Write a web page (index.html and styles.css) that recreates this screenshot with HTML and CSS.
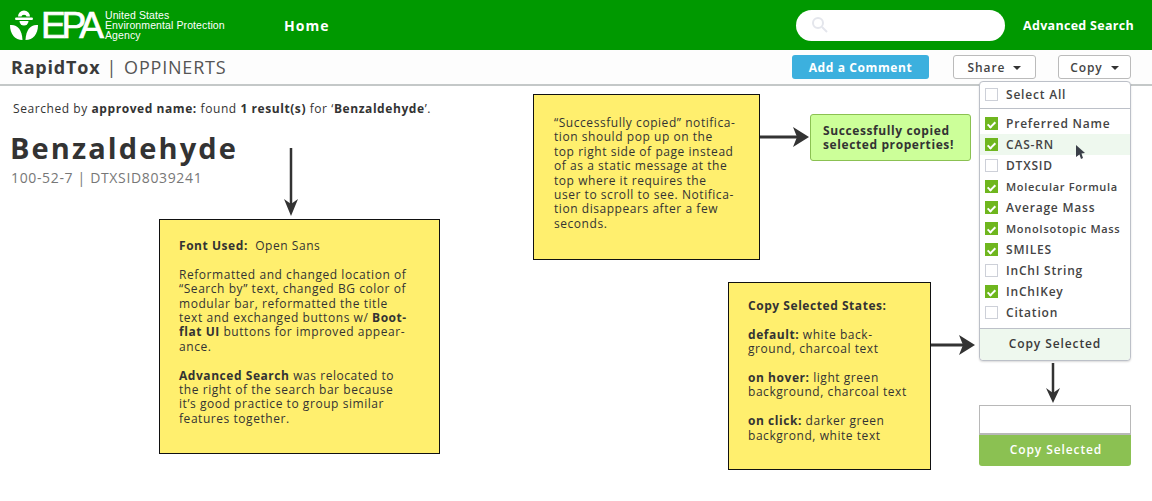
FILE: index.html
```html
<!DOCTYPE html>
<html lang="en">
<head>
  <meta charset="UTF-8" />
  <title>RapidTox | OPPINERTS</title>
  <link rel="stylesheet" href="styles.css">
</head>
<body>
  <header class="topbar">
    <div class="logo">
      <svg class="logo-mark" width="28" height="30" viewBox="0 0 28 30">
        <path d="M8 6.500a6 6 0 0 1 12 0h-3.500a2.500 1.800 0 0 0-5 0z" fill="#fff"/>
        <rect x="5" y="7.500" width="18" height="2.500" rx="1.200" fill="#fff"/>
        <path d="M9.500 11h9a4.500 4.500 0 0 1-9 0z" fill="#fff"/>
        <path d="M0 15c7-1 12 4 12.500 15C5 30 0 24 0 15z" fill="#fff"/>
        <path d="M28 15c-7-1-12 4-12.500 15C23 30 28 24 28 15z" fill="#fff"/>
      </svg>
      <span class="logo-epa">EPA</span>
      <span class="logo-name">United States<br>Environmental Protection<br>Agency</span>
    </div>
    <a class="nav-home">Home</a>
    <div class="search">
      <svg width="18" height="18" viewBox="0 0 18 18" fill="none" stroke="#e4e6ec" stroke-width="2">
        <circle cx="7" cy="7" r="5"/>
        <path d="M11 11l5 5"/>
      </svg>
    </div>
    <a class="nav-advanced">Advanced Search</a>
  </header>

  <div class="subbar">
    <div class="app-title"><b>RapidTox</b><span class="sep">|</span><span class="app-sub">OPPINERTS</span></div>
    <div class="subbar-actions">
      <button class="btn btn-blue">Add a Comment</button>
      <button class="btn btn-share">Share <i class="caret"></i></button>
      <button class="btn btn-copy">Copy <i class="caret"></i></button>
    </div>
  </div>

  <main class="canvas">
    <p class="searched">Searched by <b>approved name:</b> found <b>1 result(s)</b> for ‘<b>Benzaldehyde</b>’.</p>
    <h1 class="chem-name">Benzaldehyde</h1>
    <p class="chem-ids">100-52-7 | DTXSID8039241</p>

    <svg class="arrow arrow-down-1" width="16" height="68" viewBox="0 0 16 68">
      <path d="M8 0V60" stroke="#333" stroke-width="2.500"/>
      <path d="M1 51L8 68L15 51L8 56z" fill="#333"/>
    </svg>

    <div class="note note-font">
      <p><b>Font Used:</b>&nbsp; Open Sans</p>
      <p>Reformatted and changed location of<br>“Search by” text, changed BG color of<br>modular bar, reformatted the title<br>text and exchanged buttons w/ <b>Boot-<br>flat UI</b> buttons for improved appear-<br>ance.</p>
      <p><b>Advanced Search</b> was relocated to<br>the right of the search bar because<br>it’s good practice to group similar<br>features together.</p>
    </div>

    <div class="note note-toast">
      <p>“Successfully copied” notifica-<br>tion should pop up on the<br>top right side of page instead<br>of as a static message at the<br>top where it requires the<br>user to scroll to see. Notifica-<br>tion disappears after a few<br>seconds.</p>
    </div>

    <svg class="arrow arrow-right-1" width="49" height="20" viewBox="0 0 49 20">
      <path d="M0 10H42" stroke="#333" stroke-width="3"/>
      <path d="M33 0L49 10L33 20L37 10z" fill="#333"/>
    </svg>

    <div class="toast">Successfully copied<br>selected properties!</div>

    <div class="note note-states">
      <p><b>Copy Selected States:</b></p>
      <p><b>default:</b> white back-<br>ground, charcoal text</p>
      <p><b>on hover:</b> light green<br>background, charcoal text</p>
      <p><b>on click:</b> darker green<br>backgrond, white text</p>
    </div>

    <svg class="arrow arrow-right-2" width="44" height="20" viewBox="0 0 44 20">
      <path d="M0 10H36" stroke="#333" stroke-width="3"/>
      <path d="M28 0L44 10L28 20L32 10z" fill="#333"/>
    </svg>

    <div class="menu">
      <label class="menu-row menu-all"><i class="check"></i>Select All</label>
      <ul class="menu-list">
        <li class="menu-row"><i class="check on"></i>Preferred Name</li>
        <li class="menu-row hover"><i class="check on"></i>CAS-RN</li>
        <li class="menu-row"><i class="check"></i>DTXSID</li>
        <li class="menu-row small"><i class="check on"></i>Molecular Formula</li>
        <li class="menu-row"><i class="check on"></i>Average Mass</li>
        <li class="menu-row small"><i class="check on"></i>MonoIsotopic Mass</li>
        <li class="menu-row"><i class="check on"></i>SMILES</li>
        <li class="menu-row"><i class="check"></i>InChI String</li>
        <li class="menu-row"><i class="check on"></i>InChIKey</li>
        <li class="menu-row"><i class="check"></i>Citation</li>
      </ul>
      <div class="menu-foot">Copy Selected</div>
    </div>

    <svg class="cursor" width="11" height="14" viewBox="0 0 11 14">
      <path d="M1 0L10 8L6.500 8.500L8 13L6 14L4.500 9.500L1 12z" fill="#3a3f48"/>
    </svg>

    <svg class="arrow arrow-down-2" width="16" height="40" viewBox="0 0 16 40">
      <path d="M8 0V33" stroke="#333" stroke-width="2.500"/>
      <path d="M1 25L8 40L15 25L8 30z" fill="#333"/>
    </svg>

    <div class="clicked">
      <div class="clicked-top"></div>
      <div class="clicked-foot">Copy Selected</div>
    </div>
  </main>
</body>
</html>
```

FILE: styles.css
```css
* {
  box-sizing: border-box;
}

body {
  margin: 0;
  font-family: "Open Sans", sans-serif;
  color: #333;
  background: #fff;
  overflow: hidden;
}

p {
  margin: 0;
}

.topbar {
  display: flex;
  align-items: center;
  height: 50px;
  padding-left: 10px;
  background: #009900;
  color: #fff;
}

.logo {
  display: flex;
  align-items: center;
  width: 274px;
}

.logo-mark {
  flex: none;
}

.logo-epa {
  margin-left: 3px;
  width: 64px;
  font-family: "Liberation Sans", sans-serif;
  font-size: 37px;
  line-height: 37px;
  letter-spacing: -4.200px;
  -webkit-text-stroke: 0.7px #fff;
}

.logo-name {
  font-family: "Liberation Sans", sans-serif;
  font-size: 10.500px;
  line-height: 10px;
  letter-spacing: 0.1px;
}

.nav-home {
  width: 512px;
  font-size: 14px;
  font-weight: 700;
  letter-spacing: 1px;
}

.search {
  display: flex;
  align-items: center;
  width: 209px;
  height: 31px;
  padding-left: 15px;
  border-radius: 16px;
  background: #fff;
}

.nav-advanced {
  margin-left: 18px;
  font-size: 12.500px;
  font-weight: 700;
  letter-spacing: 0.3px;
}

.subbar {
  display: flex;
  align-items: center;
  justify-content: space-between;
  height: 36px;
  padding: 0 21px 0 11px;
  border-bottom: 2px solid #c4c8c8;
  background: #fdfdfd;
}

.app-title {
  font-size: 18px;
  letter-spacing: 0.8px;
  color: #555;
}

.app-title b {
  color: #3a3a3a;
}

.sep {
  margin: 0 7px 0 6px;
}

.subbar-actions {
  display: flex;
  gap: 22px;
}

.btn {
  height: 24px;
  padding: 0;
  border: 1px solid #bbb;
  border-radius: 3px;
  background: #fff;
  color: #444;
  font-family: "Open Sans", sans-serif;
  font-size: 12px;
  font-weight: 600;
  letter-spacing: 0.9px;
}

.btn-blue {
  width: 137px;
  margin-right: 2px;
  border: none;
  background: #3cb0de;
  color: #fff;
  font-weight: 700;
  letter-spacing: 0.6px;
}

.btn-share {
  width: 83px;
}

.btn-copy {
  width: 73px;
}

.caret {
  display: inline-block;
  margin-left: 4px;
  border-top: 4px solid #333;
  border-left: 4px solid transparent;
  border-right: 4px solid transparent;
  vertical-align: middle;
}

/* annotated canvas, everything below is placed where the mockup has it */
.canvas {
  position: relative;
  height: 415px;
  padding: 14px 0 0 13px;
}

.searched {
  font-size: 12px;
  letter-spacing: 0.57px;
  line-height: 18px;
}

.chem-name {
  margin: 10px 0 0 -3px;
  font-size: 29px;
  line-height: 40px;
  letter-spacing: 2.1px;
  color: #333;
}

.chem-ids {
  margin: 1px 0 0 -2px;
  font-size: 14px;
  line-height: 18px;
  letter-spacing: 0.65px;
  color: #777;
}

.arrow,
.cursor {
  position: absolute;
}

.arrow-down-1 {
  left: 283px;
  top: 62px;
}

.arrow-right-1 {
  left: 760px;
  top: 41px;
}

.arrow-right-2 {
  left: 931px;
  top: 249px;
}

.arrow-down-2 {
  left: 1045px;
  top: 277px;
}

.cursor {
  left: 1075px;
  top: 59px;
}

.note {
  position: absolute;
  display: flex;
  flex-direction: column;
  gap: 14.400px;
  border: 1px solid #111;
  background: #ffef6e;
  font-size: 12px;
  line-height: 14.400px;
  letter-spacing: 0.55px;
}

.note-font {
  left: 159px;
  top: 133px;
  width: 281px;
  height: 235px;
  padding: 19px 0 0 19px;
}

.note-toast {
  left: 533px;
  top: 8px;
  width: 227px;
  height: 166px;
  padding: 21px 0 0 20px;
}

.note-states {
  left: 728px;
  top: 196px;
  width: 203px;
  height: 188px;
  padding: 16px 0 0 19px;
}

.toast {
  position: absolute;
  left: 810px;
  top: 28px;
  width: 161px;
  height: 47px;
  padding: 9px 0 0 12px;
  border: 1px solid #8bc152;
  border-radius: 3px;
  background: #ccff99;
  font-size: 12px;
  font-weight: 700;
  line-height: 14px;
  letter-spacing: 0.6px;
}

.menu {
  position: absolute;
  left: 979px;
  top: -5px;
  width: 152px;
  height: 280px;
  display: flex;
  flex-direction: column;
  border: 1px solid #bcc0c8;
  border-radius: 4px;
  background: #fff;
  box-shadow: 0 1px 2px rgba(0, 0, 0, 0.15);
}

.menu-row {
  display: flex;
  align-items: center;
  height: 21px;
  padding-left: 5px;
  font-size: 12px;
  font-weight: 600;
  letter-spacing: 0.8px;
  color: #444;
}

.menu-row.small {
  font-size: 11px;
  letter-spacing: 0.7px;
}

.menu-row.hover {
  background: #eef8ee;
}

.menu-all {
  height: 26px;
  margin-top: 1px;
  border-bottom: 1px solid #bcc0c8;
  padding-bottom: 2px;
}

.menu-list {
  flex: 1;
  margin: 0;
  padding: 4px 0 0;
  list-style: none;
}

.check {
  position: relative;
  flex: none;
  width: 13px;
  height: 13px;
  margin-right: 8px;
  border: 1px solid #cdd0d8;
  background: #fff;
}

.check.on {
  border: none;
  background: #6fb61e;
}

.check.on::after {
  content: "";
  position: absolute;
  left: 4px;
  top: 2.500px;
  width: 3px;
  height: 6px;
  border-right: 2px solid #fff;
  border-bottom: 2px solid #fff;
  transform: rotate(45deg);
}

.menu-foot {
  height: 32px;
  border-top: 1px solid #bcc0c8;
  border-radius: 0 0 4px 4px;
  background: #eef8ee;
  text-align: center;
  font-size: 12px;
  font-weight: 600;
  line-height: 29px;
  letter-spacing: 0.9px;
  color: #3a3a3a;
}

.clicked {
  position: absolute;
  left: 979px;
  top: 319px;
  width: 152px;
}

.clicked-top {
  height: 30px;
  border: 1px solid #b8b8b8;
  border-bottom-width: 2px;
  background: #fff;
}

.clicked-foot {
  height: 31px;
  padding-left: 2px;
  border-radius: 0 0 3px 3px;
  background: #8bc152;
  text-align: center;
  font-size: 12px;
  font-weight: 600;
  line-height: 30px;
  letter-spacing: 0.9px;
  color: #fff;
}
```
